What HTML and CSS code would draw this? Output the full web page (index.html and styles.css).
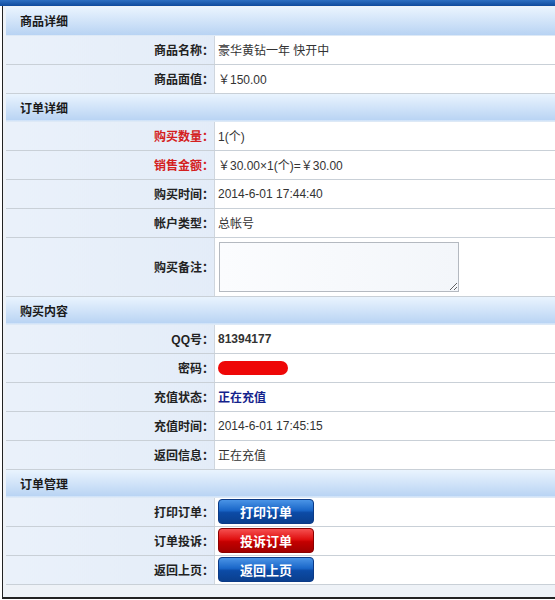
FILE: index.html
```html
<!DOCTYPE html>
<html lang="zh-CN">
<head>
    <meta charset="UTF-8">
    <title>订单详细</title>
    <link rel="stylesheet" href="styles.css">
</head>
<body>
    <div class="topbar"></div>
    <div class="frame">
        <table class="detail">
            <tr class="section"><td colspan="2">商品详细</td></tr>
            <tr>
                <td class="label">商品名称：</td>
                <td class="value">豪华黄钻一年 快开中</td>
            </tr>
            <tr>
                <td class="label">商品面值：</td>
                <td class="value">￥150.00</td>
            </tr>

            <tr class="section"><td colspan="2">订单详细</td></tr>
            <tr>
                <td class="label red">购买数量：</td>
                <td class="value">1(个)</td>
            </tr>
            <tr>
                <td class="label red">销售金额：</td>
                <td class="value">￥30.00×1(个)=￥30.00</td>
            </tr>
            <tr>
                <td class="label">购买时间：</td>
                <td class="value">2014-6-01 17:44:40</td>
            </tr>
            <tr>
                <td class="label">帐户类型：</td>
                <td class="value">总帐号</td>
            </tr>
            <tr class="tall">
                <td class="label">购买备注：</td>
                <td class="value"><textarea class="remark"></textarea></td>
            </tr>

            <tr class="section"><td colspan="2">购买内容</td></tr>
            <tr>
                <td class="label">QQ号：</td>
                <td class="value bold">81394177</td>
            </tr>
            <tr>
                <td class="label">密码：</td>
                <td class="value"><span class="masked"></span></td>
            </tr>
            <tr>
                <td class="label">充值状态：</td>
                <td class="value status">正在充值</td>
            </tr>
            <tr>
                <td class="label">充值时间：</td>
                <td class="value">2014-6-01 17:45:15</td>
            </tr>
            <tr>
                <td class="label">返回信息：</td>
                <td class="value">正在充值</td>
            </tr>

            <tr class="section"><td colspan="2">订单管理</td></tr>
            <tr>
                <td class="label">打印订单：</td>
                <td class="value"><button class="btn">打印订单</button></td>
            </tr>
            <tr>
                <td class="label">订单投诉：</td>
                <td class="value"><button class="btn btn-red">投诉订单</button></td>
            </tr>
            <tr>
                <td class="label">返回上页：</td>
                <td class="value"><button class="btn">返回上页</button></td>
            </tr>
        </table>
    </div>
</body>
</html>
```

FILE: styles.css
```css
body {
    margin: 0;
    font-family: "Liberation Sans", "Noto Sans CJK SC", sans-serif;
    font-size: 12px;
    color: #222;
    background-color: #fff;
}

.topbar {
    height: 6px;
    background: linear-gradient(#2d6fc2, #0f4a9c);
}

.frame {
    margin-left: 2px;
    border-left: 1px solid #222;
    border-bottom: 2px solid #222;
    padding: 1px 0 12px 3px;
    background-color: #eef2f7;
}

.detail {
    width: 100%;
    border-collapse: collapse;
    background-color: #fff;
}

.detail td {
    padding: 0;
    border-bottom: 1px solid #c9d0d7;
}

.detail tr {
    height: 29px;
}

.detail tr.section {
    height: 28px;
}

.detail tr.tall {
    height: 59px;
}

.section td {
    padding-left: 14px;
    font-weight: bold;
    color: #1a1a1a;
    background: linear-gradient(#eaf4fe, #cfe2f8 55%, #b8d3f3);
    border-bottom: 1px solid #dde9f6;
}

.label {
    width: 208px;
    text-align: right;
    font-weight: bold;
    color: #222;
    background: linear-gradient(to right, #eaf1fa, #e3ecf8);
    border-right: 1px solid #cfd6de;
}

.label.red {
    color: #d42020;
}

.value {
    padding-left: 3px !important;
    color: #333;
}

.bold {
    font-weight: bold;
}

.status {
    color: #14238c;
    font-weight: bold;
}

.remark {
    display: block;
    width: 236px;
    height: 46px;
    margin: 1px 0 0 1px;
    padding: 1px;
    border: 1px solid #b4b9c0;
    background: linear-gradient(to right, #fbfcfe, #f3f6fa);
    resize: both;
}

.masked {
    display: inline-block;
    width: 70px;
    height: 14px;
    vertical-align: middle;
    border-radius: 7px;
    background-color: #ee0707;
}

.btn {
    display: block;
    width: 96px;
    height: 25px;
    border: 1px solid #0b3a86;
    border-radius: 4px;
    font-family: "Noto Sans CJK SC", sans-serif;
    font-size: 13px;
    font-weight: bold;
    color: #fff;
    background: linear-gradient(#4a94e6, #1a66c8 45%, #0c4ba6 55%, #0a3f8e);
    cursor: pointer;
}

.btn-red {
    border-color: #8a0000;
    background: linear-gradient(#f55050, #e01010 45%, #c40000 55%, #a00000);
}
```
